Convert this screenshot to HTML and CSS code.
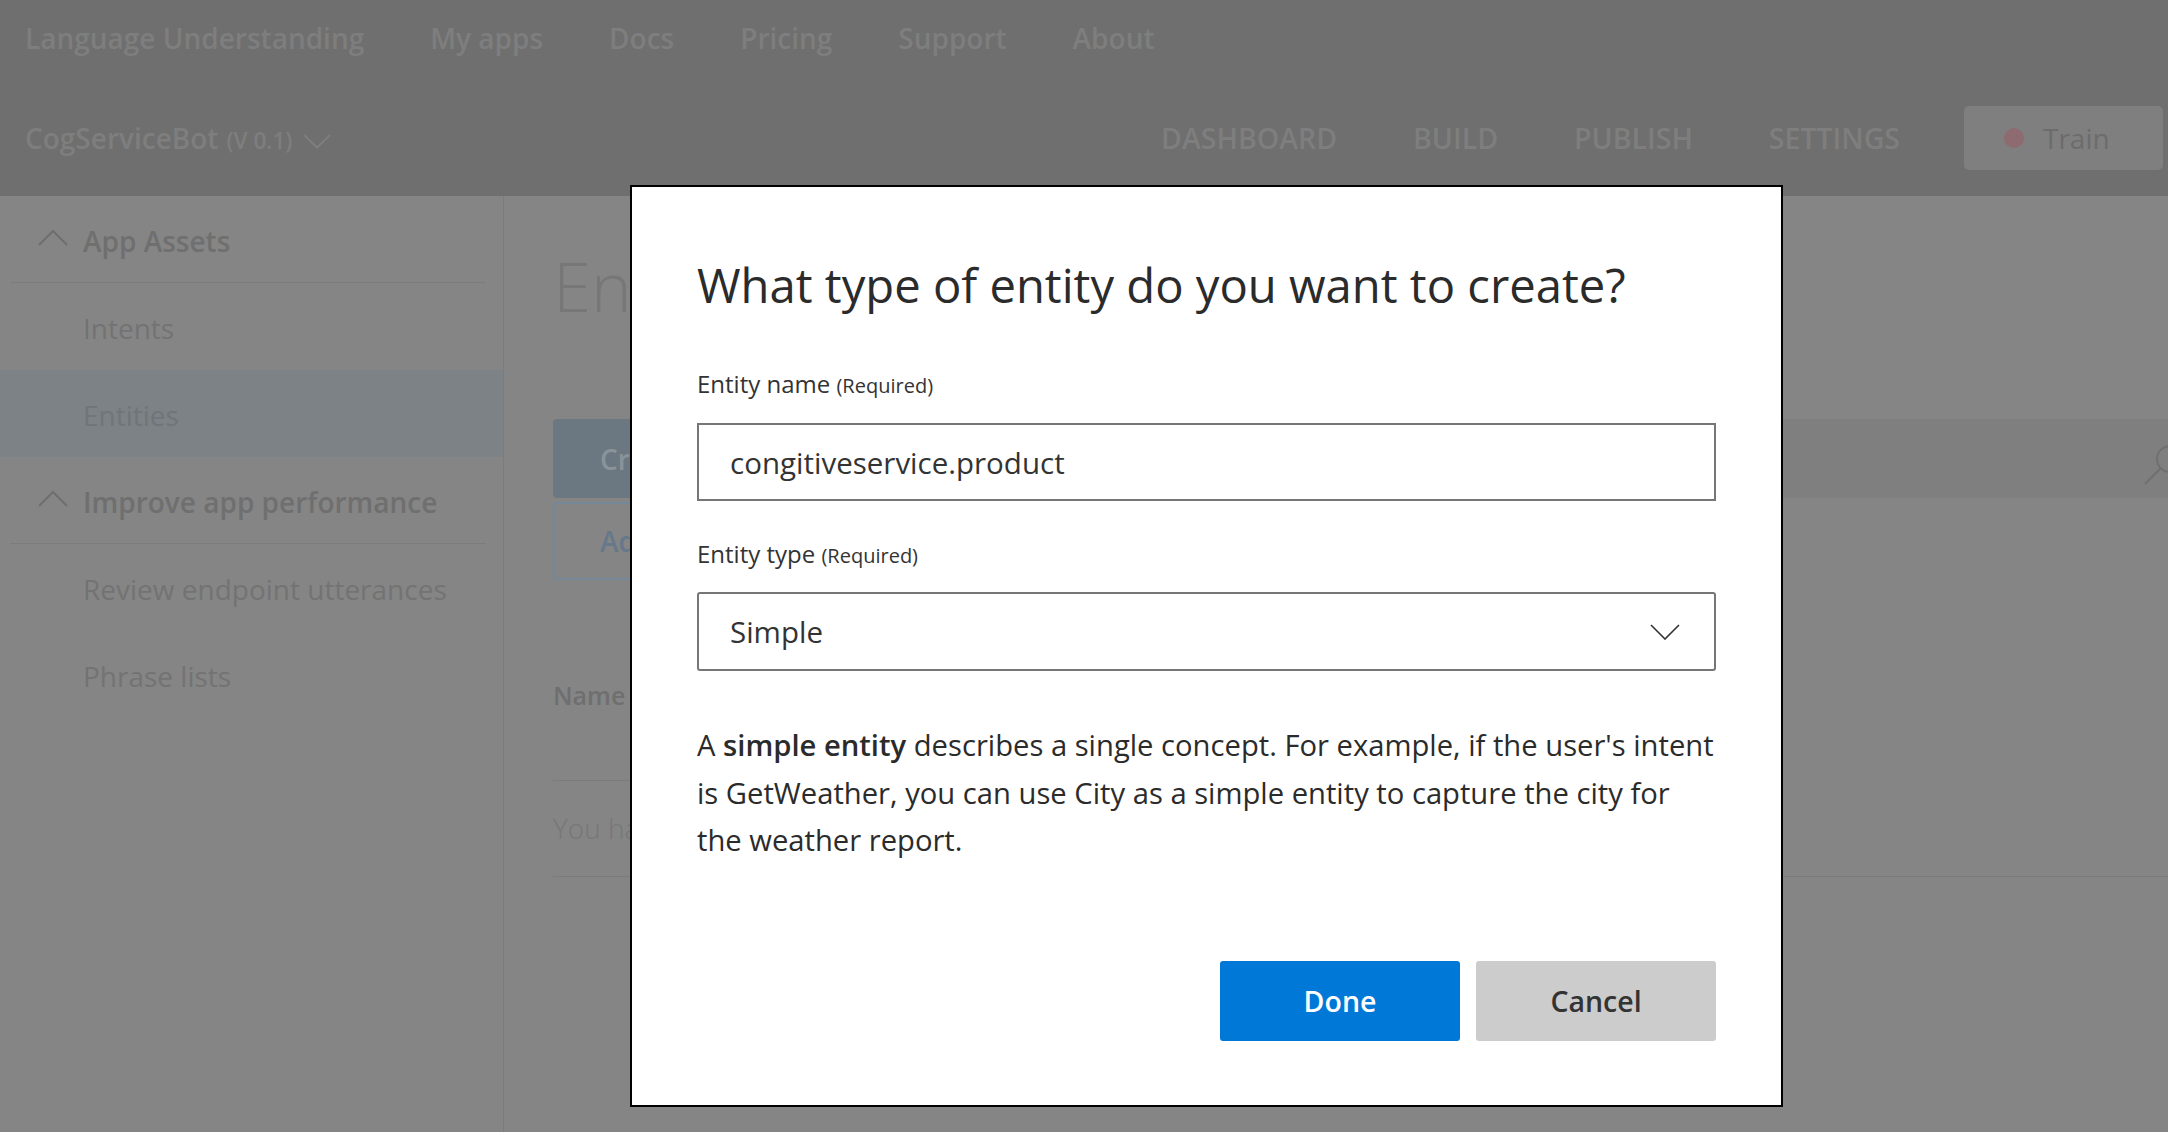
FILE: index.html
```html
<!DOCTYPE html>
<html lang="en">
<head>
<meta charset="utf-8">
<title>Language Understanding - Entities</title>
<link rel="stylesheet" href="styles.css">
</head>
<body>
<div class="page">
  <header class="topbar">
    <nav class="global-nav">
      <a class="gn-item">Language Understanding</a>
      <a class="gn-item">My apps</a>
      <a class="gn-item">Docs</a>
      <a class="gn-item">Pricing</a>
      <a class="gn-item">Support</a>
      <a class="gn-item">About</a>
    </nav>
    <div class="app-bar">
      <div class="app-name">CogServiceBot <span class="ver">(V 0.1)</span>
        <svg class="app-chev" width="28" height="15" viewBox="0 0 28 15"><polyline points="1,1 14,13.5 27,1" fill="none" stroke="#7e7e7e" stroke-width="2"/></svg>
      </div>
      <nav class="app-tabs">
        <a class="tab">DASHBOARD</a>
        <a class="tab">BUILD</a>
        <a class="tab">PUBLISH</a>
        <a class="tab">SETTINGS</a>
      </nav>
      <button class="train"><span class="dot"></span>Train</button>
    </div>
  </header>
  <div class="main-area">
    <aside class="sidebar">
      <div class="group-head">
        <svg class="up-chev" width="30" height="17" viewBox="0 0 30 17"><polyline points="1,16 15,2 29,16" fill="none" stroke="#6e6e6e" stroke-width="2"/></svg>
        <span>App Assets</span>
      </div>
      <div class="nav-item">Intents</div>
      <div class="nav-item active">Entities</div>
      <div class="group-head">
        <svg class="up-chev" width="30" height="17" viewBox="0 0 30 17"><polyline points="1,16 15,2 29,16" fill="none" stroke="#6e6e6e" stroke-width="2"/></svg>
        <span>Improve app performance</span>
      </div>
      <div class="nav-item">Review endpoint utterances</div>
      <div class="nav-item">Phrase lists</div>
    </aside>
    <main class="content">
      <h1 class="page-title">Entities</h1>
      <div class="toolbar">
        <div class="toolbar-buttons">
          <button class="btn-create">Create</button>
          <button class="btn-add">Add</button>
        </div>
        <div class="search">
          <svg class="search-icon" width="48" height="48" viewBox="0 0 48 48"><circle cx="27" cy="19" r="13" fill="none" stroke="#707070" stroke-width="2"/><line x1="17.5" y1="28.5" x2="2" y2="44" stroke="#707070" stroke-width="2"/></svg>
        </div>
      </div>
      <div class="list-head">Name</div>
      <div class="list-empty">You have</div>
    </main>
  </div>
</div>

<div class="modal" role="dialog" aria-modal="true">
  <h2 class="modal-title">What type of entity do you want to create?</h2>
  <div class="field-label">Entity name <span class="req">(Required)</span></div>
  <input class="text-input" type="text" value="congitiveservice.product">
  <div class="field-label second">Entity type <span class="req">(Required)</span></div>
  <div class="select">
    <span>Simple</span>
    <svg class="select-chev" width="30" height="16" viewBox="0 0 30 16"><polyline points="1,1 15,15 29,1" fill="none" stroke="#333" stroke-width="1.6"/></svg>
  </div>
  <p class="desc">A <b>simple entity</b> describes a single concept. For example, if the user's intent<br>is GetWeather, you can use City as a simple entity to capture the city for<br>the weather report.</p>
  <div class="actions">
    <button class="btn btn-primary">Done</button>
    <button class="btn btn-secondary">Cancel</button>
  </div>
</div>
</body>
</html>
```

FILE: styles.css
```css
html, body {
  margin: 0;
  padding: 0;
}
body {
  width: 2168px;
  height: 1132px;
  overflow: hidden;
  position: relative;
  background: #858585;
  font-family: "Open Sans", "Segoe UI", sans-serif;
  color: #333;
}
a { text-decoration: none; }
button { font-family: inherit; cursor: pointer; }

.page {
  display: flex;
  flex-direction: column;
  height: 1132px;
}

/* ---------- top bar ---------- */
.topbar {
  background: #6f6f6f;
  height: 196px;
  flex: none;
}
.global-nav {
  display: flex;
  align-items: center;
  height: 76px;
  padding-left: 25px;
  gap: 66px;
}
.gn-item {
  color: #7e7e7e;
  font-size: 28px;
  font-weight: 600;
  line-height: 76px;
}
.app-bar {
  display: flex;
  align-items: center;
  height: 120px;
  box-sizing: border-box;
  padding: 4px 5px 0 25px;
}
.app-name {
  display: flex;
  align-items: center;
  color: #7e7e7e;
  font-size: 28px;
  font-weight: 600;
}
.ver {
  font-size: 22.5px;
  margin-left: 8px;
  padding-top: 4px;
}
.app-chev {
  margin-left: 11px;
  margin-top: 6px;
}
.app-tabs {
  margin-left: auto;
  display: flex;
  gap: 76px;
}
.tab {
  color: #7e7e7e;
  font-size: 28.5px;
  font-weight: 600;
}
.train {
  margin-left: 64px;
  width: 199px;
  height: 64px;
  border: none;
  border-radius: 5px;
  background: #7f7f7f;
  color: #6c6c6c;
  font-size: 28px;
  font-weight: 400;
  display: flex;
  align-items: center;
  padding: 0 0 0 40px;
  gap: 19px;
}
.dot {
  width: 20px;
  height: 20px;
  border-radius: 50%;
  background: #8d6b70;
}

/* ---------- main area ---------- */
.main-area {
  flex: 1;
  display: flex;
  min-height: 0;
}
.sidebar {
  width: 504px;
  flex: none;
  box-sizing: border-box;
  border-right: 1px solid #7c7c7c;
}
.group-head {
  height: 87px;
  box-sizing: border-box;
  margin: 0 17px 0 10px;
  padding: 3px 0 0 28px;
  border-bottom: 1px solid #7c7c7c;
  display: flex;
  align-items: center;
  gap: 15px;
  color: #6f6f6f;
  font-size: 28px;
  font-weight: 600;
}
.up-chev { margin-top: -6px; }
.nav-item {
  height: 87px;
  box-sizing: border-box;
  padding: 2px 0 0 83px;
  display: flex;
  align-items: center;
  color: #737373;
  font-size: 28px;
  font-weight: 400;
}
.nav-item.active {
  background: #7c8286;
  color: #717579;
}

.content {
  flex: 1;
  min-width: 0;
  padding: 39px 0 0 49px;
}
.page-title {
  margin: 0;
  font-size: 69px;
  font-weight: 300;
  line-height: 100px;
  color: #777;
}
.toolbar {
  display: flex;
  margin-top: 84px;
}
.toolbar-buttons {
  display: flex;
  flex-direction: column;
  gap: 4px;
}
.btn-create, .btn-add {
  width: 330px;
  box-sizing: border-box;
  border-radius: 4px;
  font-size: 28px;
  font-weight: 600;
  text-align: left;
  padding-left: 47px;
}
.btn-create {
  height: 79px;
  border: none;
  background: #6b7781;
  color: #8a939a;
}
.btn-add {
  height: 78px;
  border: 2px solid #75889a;
  background: transparent;
  color: #66788a;
  padding-left: 45px;
}
.search {
  flex: 1;
  height: 79px;
  background: #7f7f7f;
  display: flex;
  justify-content: flex-end;
  align-items: flex-start;
}
.search-icon {
  margin-top: 21px;
  margin-right: -23px;
  flex: none;
}
.list-head {
  margin-top: 95px;
  padding-bottom: 65px;
  font-size: 25px;
  font-weight: 600;
  line-height: 40px;
  color: #6f6f6f;
  width: 80px;
  border-bottom: 1px solid #7b7b7b;
}
.list-empty {
  padding: 27px 0 28px;
  border-bottom: 1px solid #7b7b7b;
  font-size: 28px;
  font-weight: 300;
  line-height: 40px;
  color: #777;
}

/* ---------- modal ---------- */
.modal {
  position: absolute;
  left: 630px;
  top: 185px;
  width: 1153px;
  box-sizing: border-box;
  border: 2px solid #000;
  background: #fff;
  padding: 68px 65px 64px;
  color: #333;
}
.modal-title {
  margin: 0;
  font-size: 47.2px;
  font-weight: 400;
  line-height: 60px;
  color: #2b2b2b;
}
.field-label {
  margin-top: 53px;
  font-size: 24px;
  line-height: 32px;
  color: #333;
}
.field-label.second { margin-top: 37px; }
.req { font-size: 20px; }
.text-input {
  display: block;
  margin: 21px 0 0;
  width: 100%;
  height: 78px;
  box-sizing: border-box;
  border: 2px solid #767676;
  border-radius: 0;
  padding: 0 31px;
  font-family: inherit;
  font-size: 29.5px;
  color: #333;
  background: #fff;
  outline: none;
}
.select {
  margin-top: 20px;
  height: 79px;
  box-sizing: border-box;
  border: 2px solid #767676;
  border-radius: 3px;
  padding: 0 34px 0 31px;
  display: flex;
  align-items: center;
  justify-content: space-between;
  font-size: 29.5px;
  color: #333;
}
.desc {
  margin: 51px 0 0;
  font-size: 29.2px;
  line-height: 47.6px;
  color: #2b2b2b;
  white-space: nowrap;
}
.desc b { font-weight: 600; }
.actions {
  margin-top: 96px;
  display: flex;
  justify-content: flex-end;
  gap: 16px;
}
.btn {
  width: 240px;
  height: 80px;
  border: none;
  border-radius: 3px;
  font-size: 28.5px;
  font-weight: 600;
}
.btn-primary {
  background: #0078d7;
  color: #fff;
}
.btn-secondary {
  background: #ccc;
  color: #333;
}
```
